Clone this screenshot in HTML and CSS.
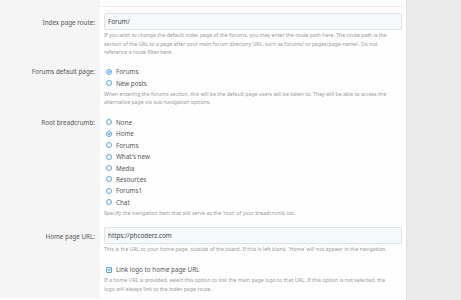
FILE: index.html
```html
<!DOCTYPE html>
<html>
<head>
<meta charset="utf-8">
<title>Options</title>
<link rel="stylesheet" href="styles.css">
</head>
<body>
<div class="page">
  <div class="form">
    <div class="row row-top">
      <div class="label"></div>
      <div class="field"></div>
    </div>

    <div class="row row-first">
      <div class="label label-input">Index page route:</div>
      <div class="field">
        <div class="input">Forum/</div>
        <p class="hint">If you wish to change the default index page of the forums, you may enter the route path here. The route path is the section of the URL to a page after your main forum directory URL, such as forums/ or pages/page-name/. Do not reference a route filter here.</p>
      </div>
    </div>

    <div class="row">
      <div class="label label-choice">Forums default page:</div>
      <div class="field">
        <ul class="choices">
          <li><span class="radio checked"></span>Forums</li>
          <li><span class="radio"></span>New posts</li>
        </ul>
        <p class="hint">When entering the forums section, this will be the default page users will be taken to. They will be able to access the alternative page via sub-navigation options.</p>
      </div>
    </div>

    <div class="row">
      <div class="label label-choice">Root breadcrumb:</div>
      <div class="field">
        <ul class="choices">
          <li><span class="radio"></span>None</li>
          <li><span class="radio checked"></span>Home</li>
          <li><span class="radio"></span>Forums</li>
          <li><span class="radio"></span>What's new</li>
          <li><span class="radio"></span>Media</li>
          <li><span class="radio"></span>Resources</li>
          <li><span class="radio"></span>Forums1</li>
          <li><span class="radio"></span>Chat</li>
        </ul>
        <p class="hint">Specify the navigation item that will serve as the 'root' of your breadcrumb list.</p>
      </div>
    </div>

    <div class="row">
      <div class="label label-input">Home page URL:</div>
      <div class="field">
        <div class="input">https://phcoderz.com</div>
        <p class="hint">This is the URL to your home page, outside of the board. If this is left blank, 'Home' will not appear in the navigation.</p>
      </div>
    </div>

    <div class="row">
      <div class="label"></div>
      <div class="field">
        <ul class="choices">
          <li><span class="checkbox checked"></span>Link logo to home page URL</li>
        </ul>
        <p class="hint">If a home URL is provided, select this option to link the main page logo to that URL. If this option is not selected, the logo will always link to the index page route.</p>
      </div>
    </div>
  </div>
  <div class="side"></div>
</div>
</body>
</html>
```

FILE: styles.css
```css
body {
    margin: 0;
    background: #ebebeb;
    font-family: "Noto Sans", "Open Sans", sans-serif;
    color: #4b4b4b;
}

.page {
    display: flex;
    height: 300px;
    overflow: hidden;
}

.form {
    width: 406px;
    background: #fefefe;
    border-right: 1px solid #e0e0e0;
}

.row {
    display: grid;
    grid-template-columns: 100px 1fr;
}

.label {
    background: #f5f5f5;
    text-align: right;
    padding-right: 5px;
    font-size: 6.3px;
    color: #555;
}

.field {
    padding: 5px 4px 5px 4px;
}

.row-first .field {
    padding-top: 6px;
    padding-bottom: 4.5px;
}

.row-top .field {
    height: 6px;
    padding: 0;
    border-bottom: 1px solid #ececec;
    margin-right: 3px;
}

.label-input {
    padding-top: 10px;
}

.row-first .label-input {
    padding-top: 11px;
}

.label-choice {
    padding-top: 6px;
}

.input {
    height: 15px;
    line-height: 15px;
    border: 1px solid #dde3e8;
    border-radius: 2px;
    background: #f6f9fc;
    padding-left: 3px;
    font-size: 6.3px;
    color: #444;
}

.hint {
    margin: 1px 10px 0 0;
    font-size: 5.2px;
    line-height: 8.5px;
    color: #9a9a9a;
}

.choices {
    list-style: none;
    margin: 0;
    padding: 0;
}

.choices li {
    display: flex;
    align-items: center;
    height: 11.4px;
    font-size: 6.3px;
    color: #555;
}

.radio,
.checkbox {
    width: 6px;
    height: 6px;
    box-sizing: border-box;
    border: 1px solid #5aa8de;
    margin: 0 4px 0 2px;
    position: relative;
}

.radio {
    border-radius: 50%;
}

.checkbox {
    border-radius: 1px;
}

.checked::after {
    content: "";
    position: absolute;
    left: 1.2px;
    top: 0.3px;
    width: 1.4px;
    height: 2.4px;
    border: solid #5aa8de;
    border-width: 0 0.9px 0.9px 0;
    transform: rotate(45deg);
}

.side {
    flex: 1;
}
```
